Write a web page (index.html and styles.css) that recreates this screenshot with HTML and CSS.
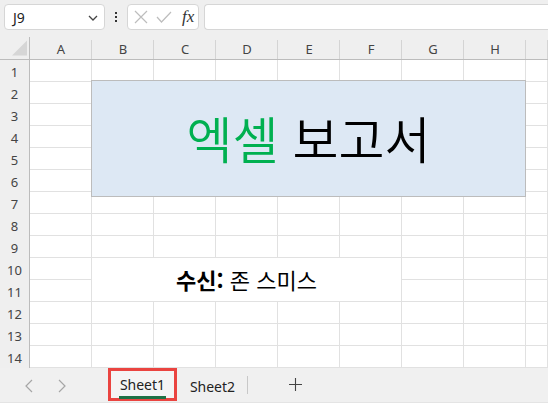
FILE: index.html
```html
<!DOCTYPE html>
<html lang="ko">
<head>
<meta charset="utf-8">
<link rel="stylesheet" href="styles.css">
</head>
<body>
<div class="app">
  <div class="toolbar">
    <div class="namebox">
      <span class="cellref">J9</span>
      <svg class="chev" width="10" height="6" viewBox="0 0 10 6"><polyline points="1,1 5,5 9,1" fill="none" stroke="#444" stroke-width="1.3"/></svg>
    </div>
    <div class="dots"><i></i><i></i><i></i></div>
    <div class="fxbox">
      <svg width="14" height="14" viewBox="0 0 14 14"><path d="M1 1 L13 13 M13 1 L1 13" stroke="#bdbdbd" stroke-width="1.2" fill="none"/></svg>
      <svg width="16" height="12" viewBox="0 0 16 12"><polyline points="1,6 5.5,11 15,1" stroke="#bdbdbd" stroke-width="1.2" fill="none"/></svg>
      <span class="fx">fx</span>
    </div>
    <div class="formula"></div>
  </div>

  <div class="sheet">
    <div class="corner"><svg width="16" height="16" viewBox="0 0 16 16"><polygon points="16,0 16,16 0,16" fill="#d6d6d6"/></svg></div>
    <div class="ch">A</div><div class="ch">B</div><div class="ch">C</div><div class="ch">D</div><div class="ch">E</div><div class="ch">F</div><div class="ch">G</div><div class="ch">H</div><div class="ch"></div>

    <div class="rh">1</div><div class="c"></div><div class="c"></div><div class="c"></div><div class="c"></div><div class="c"></div><div class="c"></div><div class="c"></div><div class="c"></div><div class="c"></div>
    <div class="rh">2</div><div class="c"></div><div class="c"></div><div class="c"></div><div class="c"></div><div class="c"></div><div class="c"></div><div class="c"></div><div class="c"></div><div class="c"></div>
    <div class="rh">3</div><div class="c"></div><div class="c"></div><div class="c"></div><div class="c"></div><div class="c"></div><div class="c"></div><div class="c"></div><div class="c"></div><div class="c"></div>
    <div class="rh">4</div><div class="c"></div><div class="c"></div><div class="c"></div><div class="c"></div><div class="c"></div><div class="c"></div><div class="c"></div><div class="c"></div><div class="c"></div>
    <div class="rh">5</div><div class="c"></div><div class="c"></div><div class="c"></div><div class="c"></div><div class="c"></div><div class="c"></div><div class="c"></div><div class="c"></div><div class="c"></div>
    <div class="rh">6</div><div class="c"></div><div class="c"></div><div class="c"></div><div class="c"></div><div class="c"></div><div class="c"></div><div class="c"></div><div class="c"></div><div class="c"></div>
    <div class="rh">7</div><div class="c"></div><div class="c"></div><div class="c"></div><div class="c"></div><div class="c"></div><div class="c"></div><div class="c"></div><div class="c"></div><div class="c"></div>
    <div class="rh">8</div><div class="c"></div><div class="c"></div><div class="c"></div><div class="c"></div><div class="c"></div><div class="c"></div><div class="c"></div><div class="c"></div><div class="c"></div>
    <div class="rh">9</div><div class="c"></div><div class="c"></div><div class="c"></div><div class="c"></div><div class="c"></div><div class="c"></div><div class="c"></div><div class="c"></div><div class="c"></div>
    <div class="rh">10</div><div class="c"></div><div class="c merged"><span><b>수신:</b> 존 스미스</span></div><div class="c"></div><div class="c"></div><div class="c"></div>
    <div class="rh">11</div><div class="c"></div><div class="c"></div><div class="c"></div><div class="c"></div>
    <div class="rh">12</div><div class="c"></div><div class="c"></div><div class="c"></div><div class="c"></div><div class="c"></div><div class="c"></div><div class="c"></div><div class="c"></div><div class="c"></div>
    <div class="rh">13</div><div class="c"></div><div class="c"></div><div class="c"></div><div class="c"></div><div class="c"></div><div class="c"></div><div class="c"></div><div class="c"></div><div class="c"></div>
    <div class="rh">14</div><div class="c"></div><div class="c"></div><div class="c"></div><div class="c"></div><div class="c"></div><div class="c"></div><div class="c"></div><div class="c"></div><div class="c"></div>

    <div class="titlebox"><span class="title"><span class="green">엑셀</span> 보고서</span></div>
  </div>

  <div class="tabs">
    <div class="nav">
      <svg width="8" height="14" viewBox="0 0 8 14"><polyline points="7,1 1,7 7,13" fill="none" stroke="#a6a6a6" stroke-width="1.2"/></svg>
    </div>
    <div class="nav">
      <svg width="8" height="14" viewBox="0 0 8 14"><polyline points="1,1 7,7 1,13" fill="none" stroke="#a6a6a6" stroke-width="1.2"/></svg>
    </div>
    <div class="tab active"><span>Sheet1</span></div>
    <div class="tab second"><span>Sheet2</span></div>
    <div class="add"><svg width="13" height="13" viewBox="0 0 13 13"><path d="M6.5 0 V13 M0 6.5 H13" stroke="#444" stroke-width="1.1" fill="none"/></svg></div>
  </div>
</div>
</body>
</html>
```

FILE: styles.css
```css
* { box-sizing: border-box; }
html, body { margin: 0; padding: 0; }
body {
  width: 548px;
  height: 406px;
  overflow: hidden;
  background: #ffffff;
  font-family: "Noto Sans", "Noto Sans CJK KR", sans-serif;
  color: #222;
}
.app { width: 548px; height: 406px; overflow: hidden; }

.toolbar {
  height: 37px;
  background: #efefef;
  display: flex;
  align-items: flex-start;
  padding: 4px 0 0 4px;
}
.namebox {
  width: 101px;
  height: 26px;
  background: #fff;
  border: 1px solid #d6d6d6;
  border-radius: 4px;
  display: flex;
  align-items: center;
  justify-content: space-between;
  padding: 0 6px 0 8px;
}
.cellref { font-size: 14px; color: #222; }
.chev { margin-top: 1px; }
.dots {
  width: 22px;
  height: 26px;
  display: flex;
  flex-direction: column;
  align-items: center;
  justify-content: center;
  gap: 2px;
}
.dots i { display: block; width: 2px; height: 2px; background: #333; }
.fxbox {
  width: 72px;
  height: 26px;
  background: #fff;
  border: 1px solid #d6d6d6;
  border-radius: 4px;
  display: flex;
  align-items: center;
  padding: 0 0 0 6px;
  gap: 8px;
}
.fx {
  font-family: "Liberation Serif", serif;
  font-style: italic;
  font-size: 17px;
  color: #333;
  margin-left: 2px;
}
.formula {
  margin-left: 5px;
  flex: 1;
  height: 26px;
  background: #fff;
  border: 1px solid #d6d6d6;
  border-right: none;
  border-radius: 4px 0 0 4px;
}

.sheet {
  position: relative;
  display: grid;
  grid-template-columns: 30px repeat(8, 62px) 22px;
  grid-template-rows: 23px repeat(14, 22px);
  background: #fff;
}
.corner {
  background: #efefef;
  border-right: 1px solid #bcbcbc;
  border-bottom: 1px solid #bcbcbc;
  padding: 3px 0 0 12px;
}
.corner svg { display: block; width: 15px; height: 16px; }
.ch {
  background: #efefef linear-gradient(#d4d4d4, #d4d4d4) right bottom / 1px 19px no-repeat;
  border-bottom: 1px solid #bcbcbc;
  display: flex;
  align-items: center;
  justify-content: center;
  font-size: 13px;
  color: #444;
  padding-top: 1px;
}
.rh {
  background: #efefef;
  border-right: 1px solid #bcbcbc;
  display: flex;
  align-items: center;
  justify-content: center;
  font-size: 13px;
  color: #444;
  padding-top: 1px;
}
.c {
  border-right: 1px solid #e1e1e1;
  border-bottom: 1px solid #e1e1e1;
}
.merged {
  grid-column: span 5;
  grid-row: span 2;
  display: flex;
  align-items: center;
  justify-content: center;
  font-family: "Noto Sans CJK KR", sans-serif;
  font-size: 22px;
  color: #000;
  padding-bottom: 2px;
}
.merged b { font-weight: 700; }

.titlebox {
  position: absolute;
  left: 91px;
  top: 43px;
  width: 435px;
  height: 117px;
  background: #dde8f4;
  border: 1px solid #bcbcbc;
  display: flex;
  align-items: center;
  justify-content: center;
  font-family: "Noto Sans CJK KR", sans-serif;
  font-size: 50px;
  font-weight: 350;
  color: #000;
  line-height: 1;
  padding-bottom: 4px;
}
.title { white-space: pre; }
.green { color: #00b050; }

.tabs {
  height: 35px;
  background: #f0f0f0;
  border-bottom: 1px solid #e4e4e4;
  display: flex;
  align-items: stretch;
  padding-left: 12px;
}
.nav {
  width: 33px;
  display: flex;
  align-items: center;
  justify-content: center;
  padding-top: 2px;
}
.tab {
  display: flex;
  align-items: center;
  justify-content: center;
  font-size: 14px;
  color: #222;
}
.tab span { position: relative; padding: 0 1px; }
.active {
  margin-left: 30px;
  width: 69px;
  height: 33px;
  border: 3px solid #ea4440;
  background: #f4f4f4;
}
.active span::after {
  content: "";
  position: absolute;
  left: 0;
  right: 0;
  bottom: -5px;
  height: 3px;
  background: #1e7145;
}
.second {
  width: 71px;
  background: linear-gradient(#c8c8c8, #c8c8c8) right center / 1px 18px no-repeat;
  padding-top: 2px;
}
.add {
  width: 94px;
  display: flex;
  align-items: center;
  justify-content: center;
  padding-bottom: 1px;
}
```
